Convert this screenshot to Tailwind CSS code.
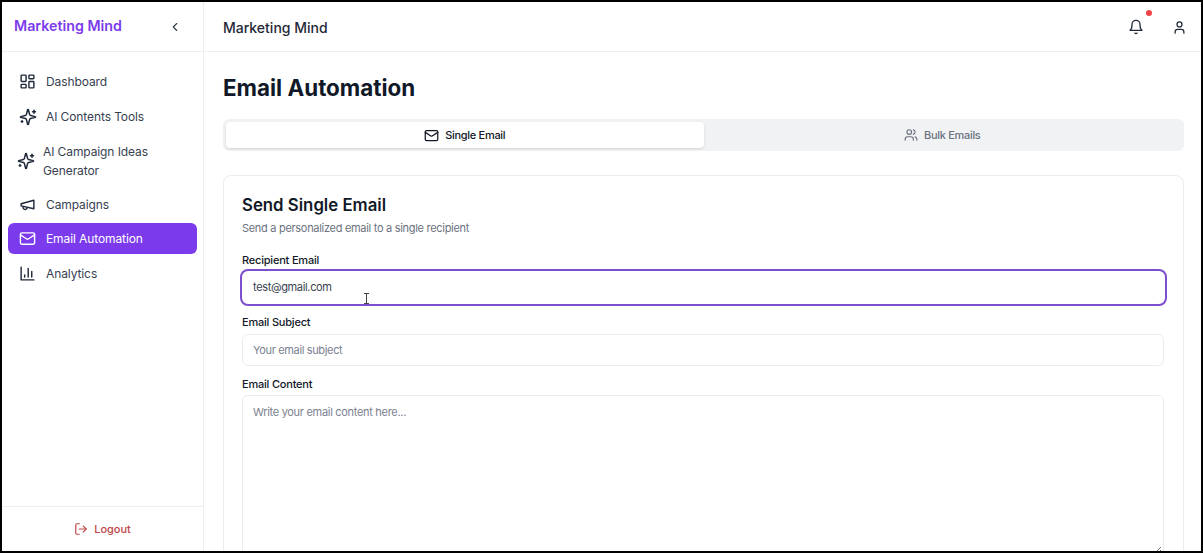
<!DOCTYPE html>
<html lang="en">

<head>
    <meta charset="UTF-8">
    <meta name="viewport" content="width=device-width, initial-scale=1.0">
    <title>Marketing Mind</title>
    <script src="https://cdn.jsdelivr.net/npm/@tailwindcss/browser@4"></script>
</head>

<body class="bg-black overflow-hidden font-['Inter',sans-serif]">
    <div class="w-[1203px] h-[553px] pt-[2px] pl-[2px] pr-[2px] pb-[2px] overflow-hidden">
        <div class="flex h-[549px] bg-white overflow-hidden relative">

            <!-- Sidebar -->
            <aside class="w-[202px] shrink-0 border-r border-gray-200/70 flex flex-col text-[12px] tracking-[-0.1px] text-[#374151]">
                <div class="h-[50px] shrink-0 border-b border-gray-200/70 flex items-center justify-between pl-[12px] pr-[21px]">
                    <span class="text-[14.25px] font-semibold tracking-normal text-[#7c3aed] leading-none">Marketing Mind</span>
                    <svg class="w-[14px] h-[14px] text-gray-700" fill="none" stroke="currentColor" stroke-width="2" stroke-linecap="round" stroke-linejoin="round" viewBox="0 0 24 24"><path d="m15 18-6-6 6-6"/></svg>
                </div>

                <nav class="flex-1 px-[6px] pt-[12px]">
                    <a class="h-[35px] flex items-center gap-[10px] pl-[11px]">
                        <svg class="w-[17px] h-[17px] text-gray-800 shrink-0" fill="none" stroke="currentColor" stroke-width="2" stroke-linecap="round" stroke-linejoin="round" viewBox="0 0 24 24"><rect width="7" height="9" x="3" y="3" rx="1"/><rect width="7" height="5" x="14" y="3" rx="1"/><rect width="7" height="9" x="14" y="12" rx="1"/><rect width="7" height="5" x="3" y="16" rx="1"/></svg>
                        Dashboard
                    </a>
                    <a class="h-[35px] flex items-center gap-[9px] pl-[11px]">
                        <svg class="w-[18px] h-[18px] text-gray-800 shrink-0" fill="none" stroke="currentColor" stroke-width="2" stroke-linecap="round" stroke-linejoin="round" viewBox="0 0 24 24"><path d="M9.9 15.5a2 2 0 0 0-1.4-1.4l-6.1-1.6a.5.5 0 0 1 0-1l6.1-1.6a2 2 0 0 0 1.4-1.4l1.6-6.1a.5.5 0 0 1 1 0l1.6 6.1a2 2 0 0 0 1.4 1.4l6.1 1.6a.5.5 0 0 1 0 1l-6.1 1.6a2 2 0 0 0-1.4 1.4l-1.6 6.1a.5.5 0 0 1-1 0z"/><path d="M20 3v4"/><path d="M22 5h-4"/><path d="M4 17v2"/><path d="M5 18H3"/></svg>
                        AI Contents Tools
                    </a>
                    <a class="h-[54px] flex items-center gap-[8px] pl-[9px] leading-[19px]">
                        <svg class="w-[18px] h-[18px] text-gray-800 shrink-0" fill="none" stroke="currentColor" stroke-width="2" stroke-linecap="round" stroke-linejoin="round" viewBox="0 0 24 24"><path d="M9.9 15.5a2 2 0 0 0-1.4-1.4l-6.1-1.6a.5.5 0 0 1 0-1l6.1-1.6a2 2 0 0 0 1.4-1.4l1.6-6.1a.5.5 0 0 1 1 0l1.6 6.1a2 2 0 0 0 1.4 1.4l6.1 1.6a.5.5 0 0 1 0 1l-6.1 1.6a2 2 0 0 0-1.4 1.4l-1.6 6.1a.5.5 0 0 1-1 0z"/><path d="M20 3v4"/><path d="M22 5h-4"/><path d="M4 17v2"/><path d="M5 18H3"/></svg>
                        <span class="w-[125px]">AI Campaign Ideas Generator</span>
                    </a>
                    <a class="h-[33px] flex items-center gap-[10px] pl-[11px]">
                        <svg class="w-[17px] h-[17px] text-gray-800 shrink-0" fill="none" stroke="currentColor" stroke-width="2" stroke-linecap="round" stroke-linejoin="round" viewBox="0 0 24 24"><path d="m3 11 18-5v12L3 14v-3z"/><path d="M11.6 16.8a3 3 0 1 1-5.8-1.6"/></svg>
                        Campaigns
                    </a>
                    <a class="h-[31px] mt-[2px] mb-[2px] flex items-center gap-[10px] pl-[11px] rounded-md bg-[#7c3aed] text-white">
                        <svg class="w-[17px] h-[17px] shrink-0" fill="none" stroke="currentColor" stroke-width="2" stroke-linecap="round" stroke-linejoin="round" viewBox="0 0 24 24"><rect width="20" height="16" x="2" y="4" rx="2"/><path d="m22 7-8.97 5.7a1.94 1.94 0 0 1-2.06 0L2 7"/></svg>
                        Email Automation
                    </a>
                    <a class="h-[35px] flex items-center gap-[10px] pl-[11px]">
                        <svg class="w-[17px] h-[17px] text-gray-800 shrink-0" fill="none" stroke="currentColor" stroke-width="2" stroke-linecap="round" stroke-linejoin="round" viewBox="0 0 24 24"><path d="M3 3v18h18"/><path d="M18 17V9"/><path d="M13 17V5"/><path d="M8 17v-3"/></svg>
                        Analytics
                    </a>
                </nav>

                <div class="h-[45px] shrink-0 border-t border-gray-200/70 flex items-center justify-center gap-[6px] text-[11px] tracking-normal font-medium text-[#c0474a]">
                    <svg class="w-[14px] h-[14px]" fill="none" stroke="currentColor" stroke-width="2" stroke-linecap="round" stroke-linejoin="round" viewBox="0 0 24 24"><path d="M9 21H5a2 2 0 0 1-2-2V5a2 2 0 0 1 2-2h4"/><path d="m16 17 5-5-5-5"/><path d="M21 12H9"/></svg>
                    Logout
                </div>
            </aside>

            <!-- Main -->
            <div class="flex-1 min-w-0 flex flex-col">
                <header class="h-[50px] shrink-0 border-b border-gray-200/70 flex items-center justify-between pl-[19px] pr-[14px] pt-[1px]">
                    <span class="text-[14px] font-medium text-[#1f2937]">Marketing Mind</span>
                    <div class="flex items-center gap-[28px]">
                        <div class="relative">
                            <svg class="w-[16px] h-[16px] text-gray-800" fill="none" stroke="currentColor" stroke-width="2" stroke-linecap="round" stroke-linejoin="round" viewBox="0 0 24 24"><path d="M6 8a6 6 0 0 1 12 0c0 7 3 9 3 9H3s3-2 3-9"/><path d="M10.3 21a1.94 1.94 0 0 0 3.4 0"/></svg>
                            <span class="absolute top-[-9px] right-[-8px] w-[6px] h-[6px] rounded-full bg-[#ef4444]"></span>
                        </div>
                        <svg class="w-[15px] h-[15px] text-gray-800" fill="none" stroke="currentColor" stroke-width="2" stroke-linecap="round" stroke-linejoin="round" viewBox="0 0 24 24"><path d="M19 21v-2a4 4 0 0 0-4-4H9a4 4 0 0 0-4 4v2"/><circle cx="12" cy="7" r="4"/></svg>
                    </div>
                </header>

                <main class="flex-1 min-h-0 overflow-hidden pl-[19px] pr-[17px]">
                    <h1 class="mt-[20px] text-[22.4px] leading-[32px] font-bold text-[#111827]">Email Automation</h1>

                    <!-- Tabs -->
                    <div class="mt-[15px] h-[32px] rounded-md bg-[#f1f2f4] p-[3px] grid grid-cols-2 text-[11px] tracking-[-0.3px] font-medium">
                        <div class="rounded bg-white shadow-sm flex items-center justify-center gap-[6px] text-[#111827]">
                            <svg class="w-[15px] h-[15px]" fill="none" stroke="currentColor" stroke-width="2" stroke-linecap="round" stroke-linejoin="round" viewBox="0 0 24 24"><rect width="20" height="16" x="2" y="4" rx="2"/><path d="m22 7-8.97 5.7a1.94 1.94 0 0 1-2.06 0L2 7"/></svg>
                            Single Email
                        </div>
                        <div class="flex items-center justify-center gap-[6px] text-[#6b7280]">
                            <svg class="w-[14px] h-[14px]" fill="none" stroke="currentColor" stroke-width="2" stroke-linecap="round" stroke-linejoin="round" viewBox="0 0 24 24"><path d="M16 21v-2a4 4 0 0 0-4-4H6a4 4 0 0 0-4 4v2"/><circle cx="9" cy="7" r="4"/><path d="M22 21v-2a4 4 0 0 0-3-3.87"/><path d="M16 3.13a4 4 0 0 1 0 7.75"/></svg>
                            Bulk Emails
                        </div>
                    </div>

                    <!-- Card -->
                    <section class="mt-[24px] rounded-lg border border-gray-200/80 px-[19px] pt-[17px] pb-4">
                        <h2 class="-ml-px text-[16.8px] leading-[24px] font-semibold text-[#111827]">Send Single Email</h2>
                        <p class="-ml-px mt-[3px] text-[11px] tracking-[-0.3px] leading-[16px] text-[#6b7280]">Send a personalized email to a single recipient</p>

                        <label class="-ml-px block mt-[16px] text-[11px] tracking-[-0.2px] leading-[16px] font-medium text-[#111827]">Recipient Email</label>
                        <div class="relative mt-[1px] -ml-[3px] -mr-[3px] h-[37px] rounded-lg border-2 border-[#7c4fd0] flex items-center pl-[11px] text-[11px] tracking-[-0.35px] text-[#374151]">
                            test@gmail.com
                            <svg class="absolute left-[121px] top-[22px] w-[7px] h-[11px] text-[#444]" fill="none" stroke="currentColor" stroke-width="1" viewBox="0 0 7 11"><path d="M1 .5h5M1 10.5h5M3.5 .5v10"/></svg>
                        </div>

                        <label class="-ml-px block mt-[8px] text-[11px] tracking-[-0.2px] leading-[16px] font-medium text-[#111827]">Email Subject</label>
                        <div class="-ml-px mt-[4px] h-[32px] rounded-md border border-gray-200/80 flex items-center pl-[10px] text-[11px] tracking-[-0.35px] text-[#7b8190]">Your email subject</div>

                        <label class="-ml-px block mt-[10px] text-[11px] tracking-[-0.2px] leading-[16px] font-medium text-[#111827]">Email Content</label>
                        <div class="-ml-px relative mt-[3px] h-[200px] rounded-md border border-gray-200/80 pl-[10px] pt-[8px] text-[11px] tracking-[-0.3px] leading-[16px] text-[#7b8190]">
                            Write your email content here...
                            <svg class="absolute right-[1px] top-[150px] w-[8px] h-[8px] text-gray-500" fill="none" stroke="currentColor" stroke-width="1" viewBox="0 0 8 8"><path d="M1 7 7 1M4 7l3-3"/></svg>
                        </div>
                    </section>
                </main>
            </div>
        </div>
    </div>
</body>

</html>
